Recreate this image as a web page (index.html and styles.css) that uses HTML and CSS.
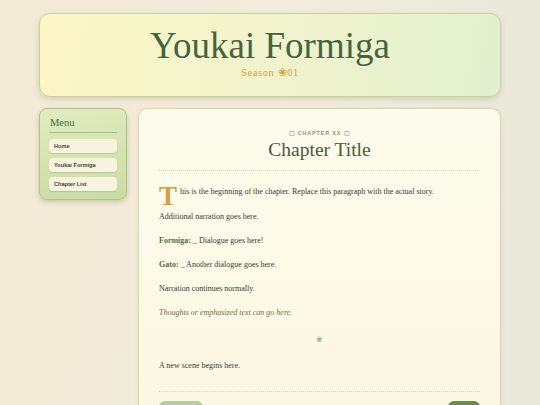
FILE: index.html
```html
<!DOCTYPE html>
<html>
<head>
<meta charset="utf-8">
<link rel="stylesheet" href="styles.css">
</head>
<body>
<div class="page">
  <header class="masthead">
    <h1 class="site-title">Youkai Formiga</h1>
    <div class="season">Season ❀01</div>
  </header>
  <div class="layout">
    <aside class="sidebar">
      <div class="menu-title">Menu</div>
      <nav class="menu">
        <a class="menu-item">Home</a>
        <a class="menu-item">Youkai Formiga</a>
        <a class="menu-item">Chapter List</a>
      </nav>
    </aside>
    <main class="chapter">
      <div class="chapter-label">▢ CHAPTER XX ▢</div>
      <h2 class="chapter-title">Chapter Title</h2>
      <div class="rule"></div>
      <div class="story">
        <p class="first"><span class="dropcap">T</span>his is the beginning of the chapter. Replace this paragraph with the actual story.</p>
        <p>Additional narration goes here.</p>
        <p><b class="speaker">Formiga:</b> _ Dialogue goes here!</p>
        <p><b class="speaker">Gato:</b> _ Another dialogue goes here.</p>
        <p>Narration continues normally.</p>
        <p class="thought">Thoughts or emphasized text can go here.</p>
        <div class="scene-break">❀</div>
        <p>A new scene begins here.</p>
      </div>
      <div class="rule bottom"></div>
      <div class="chapter-nav">
        <a class="nav-btn prev">&nbsp;</a>
        <a class="nav-btn next">&nbsp;</a>
      </div>
    </main>
  </div>
</div>
</body>
</html>
```
FILE: styles.css
```css
* { box-sizing: border-box; }
html, body { margin: 0; padding: 0; }
body {
  width: 540px;
  height: 405px;
  overflow: hidden;
  background: linear-gradient(100deg, #f3ead5 0%, #f1ecdc 50%, #e9e8da 100%);
  font-family: "Liberation Serif", "DejaVu Serif", serif;
}
.page {
  padding: 13px 39px 0 39px;
}
.masthead {
  height: 84px;
  border: 1px solid #c5d39c;
  border-radius: 11px;
  background: linear-gradient(100deg, #fdf6c6 0%, #f1f3cc 50%, #e2f0cf 100%);
  box-shadow: 0 2px 5px rgba(120, 120, 80, 0.25);
  text-align: center;
  padding-top: 12px;
}
.site-title {
  margin: 0;
  font-weight: normal;
  font-size: 37px;
  line-height: 40px;
  color: #45643a;
  text-shadow: 0 1px 0 rgba(255,255,255,0.6);
}
.season {
  margin-top: 0;
  font-size: 10.5px;
  line-height: 14px;
  letter-spacing: 0.6px;
  color: #d5a244;
}
.layout {
  display: flex;
  gap: 11px;
  margin-top: 11px;
  align-items: flex-start;
}
.sidebar {
  width: 88px;
  flex: none;
  padding: 8px 9px 8px 9px;
  border: 1px solid #aec384;
  border-radius: 8px;
  background: linear-gradient(170deg, #e0ecbe 0%, #c9dca3 100%);
  box-shadow: 0 2px 5px rgba(100, 120, 60, 0.3);
}
.menu-title {
  font-size: 10.5px;
  color: #4d6a3c;
  padding: 0 0 4px 1px;
  border-bottom: 1px solid #a9c088;
  margin-bottom: 6px;
}
.menu {
  display: flex;
  flex-direction: column;
  gap: 5px;
}
.menu-item {
  display: block;
  height: 14px;
  line-height: 14px;
  padding-left: 5px;
  background: #f8f4df;
  border-radius: 4px;
  font-family: "Liberation Sans", Arial, sans-serif;
  font-size: 5.6px;
  font-weight: bold;
  color: #3c4634;
  box-shadow: 0 1px 1px rgba(100, 120, 60, 0.25);
}
.chapter {
  flex: 1;
  height: 320px;
  background: linear-gradient(180deg, #fdfcec 0%, #fcf7e3 100%);
  border: 1px solid #dcd6ae;
  border-radius: 10px;
  padding: 21px 20px 0 20px;
  box-shadow: 0 1px 4px rgba(120, 120, 80, 0.15);
}
.chapter-label {
  text-align: center;
  font-family: "Liberation Sans", Arial, sans-serif;
  font-size: 5.5px;
  font-weight: bold;
  letter-spacing: 0.8px;
  color: #8a9a72;
}
.chapter-title {
  margin: 3px 0 0 0;
  text-align: center;
  font-weight: normal;
  font-size: 19.5px;
  line-height: 22px;
  color: #4a5c3c;
}
.rule {
  margin-top: 9px;
  border-top: 1px dotted #d8d4b4;
}
.story {
  padding-top: 14px;
  font-size: 8px;
  color: #3c3a30;
}
.story p {
  margin: 0 0 11px 0;
  line-height: 13px;
}
.dropcap {
  float: left;
  font-size: 27px;
  line-height: 20px;
  font-weight: bold;
  color: #d5a040;
  margin: 1px 3px 0 0;
}
.story p.first { margin-bottom: 4px; }
.story p.first::after { content: ""; display: block; clear: both; }
.speaker { color: #54703e; }
.thought {
  font-style: italic;
  color: #7a6a48;
}
.scene-break {
  text-align: center;
  color: #9ab07a;
  font-size: 8px;
  height: 20px;
  line-height: 20px;
  margin: 2px 0 9px;
}
.rule.bottom { margin-top: 19px; }
.chapter-nav {
  display: flex;
  justify-content: space-between;
  margin-top: 9px;
}
.nav-btn {
  display: block;
  height: 14px;
  border-radius: 6px;
}
.nav-btn.prev { width: 44px; background: #bacba2; }
.nav-btn.next { width: 32px; background: #6a8a50; }
```
